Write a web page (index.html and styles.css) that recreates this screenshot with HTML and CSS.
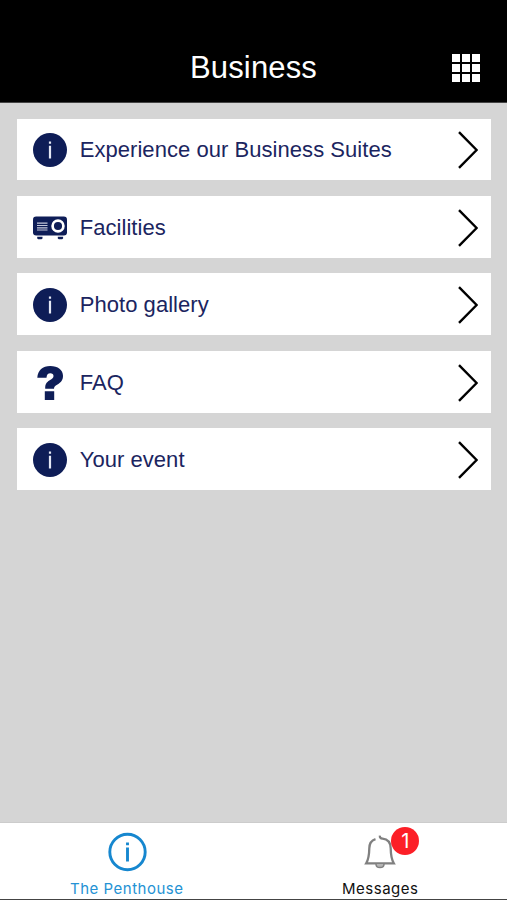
FILE: index.html
```html
<!DOCTYPE html>
<html lang="en">
<head>
  <meta charset="UTF-8">
  <meta name="viewport" content="width=device-width, initial-scale=1.0">
  <title>Business</title>
  <link rel="stylesheet" href="styles.css">
</head>
<body>
  <!-- Shared icons -->
  <svg class="sprite" aria-hidden="true">
    <symbol id="info" viewBox="0 0 34 34">
      <circle cx="17" cy="17" r="17" fill="#0e1d57"/>
      <path d="M17 12.7V25.5M17 8.5V10.8" stroke="#e4e7f4" stroke-width="2.2" fill="none"/>
    </symbol>
    <symbol id="chevron" viewBox="0 0 20 38">
      <path d="M1 1.2L18.6 19L1 36.8" stroke="#000" stroke-width="2.4" fill="none"/>
    </symbol>
  </svg>

  <header class="header">
    <h1 class="title">Business</h1>
    <button class="menu-btn" aria-label="Menu">
      <span></span><span></span><span></span>
      <span></span><span></span><span></span>
      <span></span><span></span><span></span>
    </button>
  </header>

  <main class="list">
    <a class="row">
      <svg class="icon"><use href="#info"/></svg>
      <span class="label">Experience our Business Suites</span>
      <svg class="chevron"><use href="#chevron"/></svg>
    </a>
    <a class="row">
      <svg class="icon" viewBox="0 0 34 34">
        <rect x="0" y="5.5" width="34" height="19" rx="3.2" fill="#0e1d57"/>
        <path d="M4.200 25.700h5.300v1.700l-1 .8h-3.300l-1-.8zM24.800 25.700h5.300v1.700l-1 .8h-3.300l-1-.8z" fill="#0e1d57"/>
        <path d="M4 12.200H14.500M4 14.500H14.500M4 16.800H14.500M4 19H14.500" stroke="#c5c9dc" stroke-width="1.200"/>
        <circle cx="25" cy="15" r="5.400" fill="none" stroke="#fff" stroke-width="2.700"/>
      </svg>
      <span class="label">Facilities</span>
      <svg class="chevron"><use href="#chevron"/></svg>
    </a>
    <a class="row">
      <svg class="icon"><use href="#info"/></svg>
      <span class="label">Photo gallery</span>
      <svg class="chevron"><use href="#chevron"/></svg>
    </a>
    <a class="row">
      <svg class="icon" viewBox="0 0 34 34">
        <path d="M4.3 11.7C4.8 4.2 9.6 0 17.2 0C25 0 30 4 30 9.8C30 14.2 28 16.3 24.5 18.6C21.8 20.3 21 20.9 21 22.7H12.2C12.1 18.2 13.1 16.5 16.7 14.2C19.3 12.5 20.5 11.7 20.5 9.9C20.5 8.3 19.3 7.3 17.3 7.3C15 7.3 13.7 8.8 13.5 11.7zM11.8 25.2H21.2V34H11.8z" fill="#0e1d57"/>
      </svg>
      <span class="label">FAQ</span>
      <svg class="chevron"><use href="#chevron"/></svg>
    </a>
    <a class="row">
      <svg class="icon"><use href="#info"/></svg>
      <span class="label">Your event</span>
      <svg class="chevron"><use href="#chevron"/></svg>
    </a>
  </main>

  <nav class="tabs">
    <a class="tab active">
      <svg class="tab-icon" viewBox="0 0 40 40">
        <circle cx="20.5" cy="20" r="17.7" fill="none" stroke="#1687cf" stroke-width="2.9"/>
        <path d="M20.5 15.5V29.5M20.5 10.5V13.2" stroke="#1687cf" stroke-width="2.9"/>
      </svg>
      <span class="tab-label">The Penthouse</span>
    </a>
    <a class="tab">
      <svg class="tab-icon" viewBox="0 0 40 40">
        <path d="M15.5 7.2C11 8.6 9.4 11.8 9.3 16.3C9.2 23 8.8 27 6.2 31.3H33.8C31.2 27 30.8 23 30.7 16.3C30.6 10.6 27.5 7.1 22.5 6.6C20.6 6.4 19.6 5.3 19.9 3.6" fill="none" stroke="#808080" stroke-width="2.3"/>
        <path d="M16 32C16 36.8 24 36.8 24 32" fill="#b5b5b5" stroke="#808080" stroke-width="1.5"/>
      </svg>
      <span class="tab-label">Messages</span>
      <span class="badge">1</span>
    </a>
  </nav>
</body>
</html>
```

FILE: styles.css
```css
* {
  box-sizing: border-box;
}

body {
  display: flex;
  flex-direction: column;
  height: 900px;
  margin: 0;
  background: #d5d5d5;
  font-family: "Liberation Sans", Arial, sans-serif;
}

.sprite {
  display: none;
}

.header {
  display: grid;
  grid-template-columns: 1fr auto 1fr;
  align-items: center;
  height: 103px;
  padding: 34px 27px 0;
  background: #000;
  border-bottom: 1px solid #444;
}

.title {
  grid-column: 2;
  margin: 0;
  color: #fff;
  font-size: 31px;
  font-weight: normal;
  letter-spacing: 0.15px;
  line-height: 40px;
}

.menu-btn {
  display: grid;
  grid-template-columns: repeat(3, 8px);
  grid-auto-rows: 8px;
  gap: 2px;
  justify-self: end;
  padding: 0;
  border: 0;
  background: none;
}

.menu-btn span {
  background: #fff;
}

.list {
  display: flex;
  flex: 1;
  flex-direction: column;
  gap: 15.7px;
  padding: 15.7px 16px 0 16.7px;
}

.row {
  display: flex;
  align-items: center;
  height: 61.7px;
  padding: 1.8px 13px 0 16px;
  background: #fff;
}

.icon {
  width: 34px;
  height: 34px;
}

.label {
  flex: 1;
  margin-left: 13px;
  color: #1b2560;
  font-size: 22px;
  letter-spacing: 0.05px;
}

.chevron {
  width: 20px;
  height: 38px;
}

.tabs {
  display: flex;
  height: 78px;
  background: #fff;
  border-top: 1px solid #ccc;
  border-bottom: 1px solid #444;
}

.tab {
  position: relative;
  display: flex;
  flex: 1;
  flex-direction: column;
  align-items: center;
  padding-top: 9px;
  color: #111;
}

.tab.active {
  color: #2492d4;
}

.tab-icon {
  width: 40px;
  height: 40px;
}

.tab-label {
  margin-top: 7px;
  font-family: Inter, sans-serif;
  font-size: 15px;
  letter-spacing: 0.5px;
  line-height: 20px;
}

.badge {
  position: absolute;
  top: 4px;
  left: calc(50% + 11px);
  width: 28px;
  height: 28px;
  border-radius: 50%;
  background: #fc1f27;
  color: #fff;
  font-family: Inter, sans-serif;
  font-size: 20px;
  line-height: 28px;
  text-align: center;
}
```
